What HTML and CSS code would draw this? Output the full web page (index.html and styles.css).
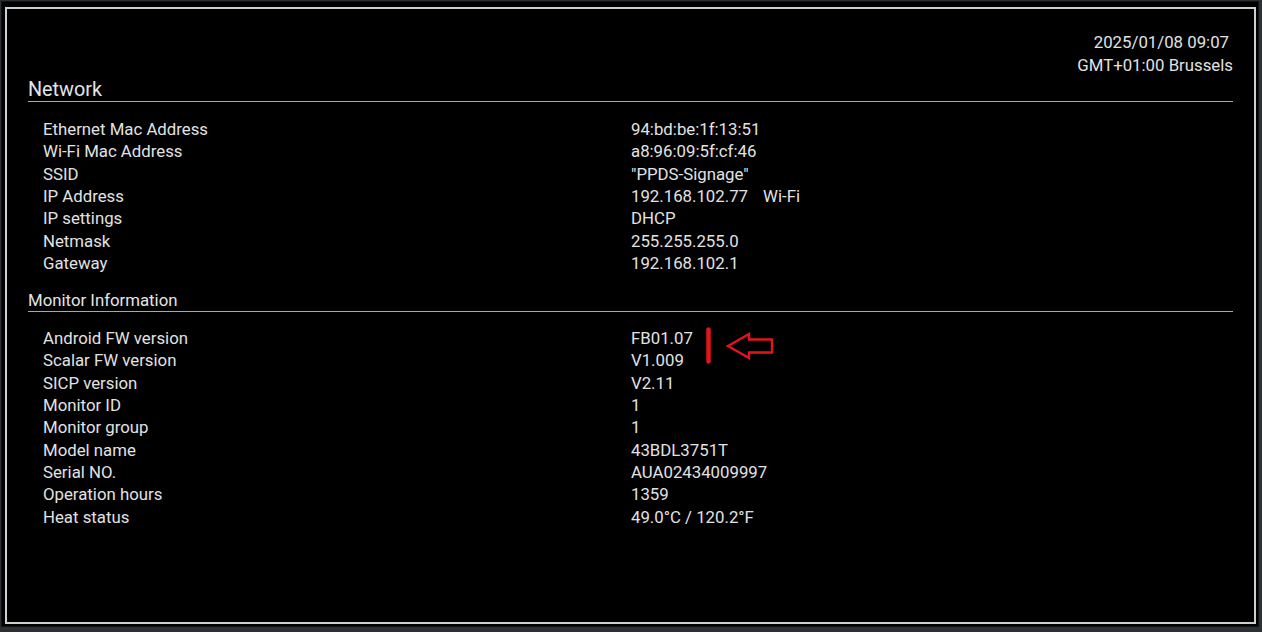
FILE: index.html
```html
<!DOCTYPE html>
<html>
<head>
<meta charset="utf-8">
<link rel="stylesheet" href="styles.css">
</head>
<body>
<div class="screen">
  <div class="frame">
    <div class="clock">
      <div class="clock-date">2025/01/08 09:07</div>
      <div class="clock-zone">GMT+01:00 Brussels</div>
    </div>
    <div class="section-title big">Network</div>
    <div class="rows first">
      <div class="label">Ethernet Mac Address</div><div class="value">94:bd:be:1f:13:51</div>
      <div class="label">Wi-Fi Mac Address</div><div class="value">a8:96:09:5f:cf:46</div>
      <div class="label">SSID</div><div class="value">"PPDS-Signage"</div>
      <div class="label">IP Address</div><div class="value">192.168.102.77<span class="iface">Wi-Fi</span></div>
      <div class="label">IP settings</div><div class="value">DHCP</div>
      <div class="label">Netmask</div><div class="value">255.255.255.0</div>
      <div class="label">Gateway</div><div class="value">192.168.102.1</div>
    </div>
    <div class="section-title small">Monitor Information</div>
    <div class="rows second">
      <div class="label">Android FW version</div><div class="value">FB01.07</div>
      <div class="label">Scalar FW version</div><div class="value">V1.009</div>
      <div class="label">SICP version</div><div class="value">V2.11</div>
      <div class="label">Monitor ID</div><div class="value">1</div>
      <div class="label">Monitor group</div><div class="value">1</div>
      <div class="label">Model name</div><div class="value">43BDL3751T</div>
      <div class="label">Serial NO.</div><div class="value">AUA02434009997</div>
      <div class="label">Operation hours</div><div class="value">1359</div>
      <div class="label">Heat status</div><div class="value">49.0°C / 120.2°F</div>
    </div>
  </div>
</div>
<svg class="marker" width="80" height="46" viewBox="0 0 80 46" xmlns="http://www.w3.org/2000/svg">
  <line x1="8.5" y1="9.5" x2="8.5" y2="41.5" stroke="#e3141c" stroke-width="4.5" stroke-linecap="round"/>
  <path d="M28 26 L49 14 L49 19.5 L72 19.5 L72 32.5 L49 32.5 L49 38 Z" fill="none" stroke="#e3141c" stroke-width="2.4" stroke-linejoin="miter"/>
</svg>
</body>
</html>
```
FILE: styles.css
```css
html, body {
  margin: 0;
  padding: 0;
}
body {
  width: 1262px;
  height: 632px;
  background: #2c2f34;
  position: relative;
  overflow: hidden;
  font-family: Roboto, "Liberation Sans", sans-serif;
}
.screen {
  position: absolute;
  left: 2px;
  top: 2px;
  width: 1256px;
  height: 624px;
  background: #000;
  box-shadow: 0 0 0 1px #111;
}
.frame {
  margin: 5px 0 0 3px;
  height: 613px;
  border: 2px solid #cfcfcf;
  padding: 0 21px;
  box-sizing: content-box;
  width: 1205px;
  color: #e2e2e2;
}
.clock {
  padding-top: 22px;
  text-align: right;
  font-size: 16.8px;
  line-height: 23px;
}
.clock-date {
  padding-right: 4px;
}
.section-title {
  border-bottom: 1px solid #a8a8a8;
  color: #e4e4e4;
}
.section-title.big {
  padding-top: 2px;
  font-size: 19.8px;
  line-height: 22px;
}
.section-title.small {
  margin-top: 15px;
  font-size: 16.8px;
  line-height: 22px;
}
.rows {
  display: grid;
  grid-template-columns: 588px 1fr;
  padding-left: 15px;
  font-size: 16.8px;
  line-height: 22.35px;
}
.rows.first {
  margin-top: 16px;
}
.rows.second {
  margin-top: 14.5px;
}
.iface {
  margin-left: 15px;
}
.marker {
  position: absolute;
  left: 700px;
  top: 320px;
}
```
